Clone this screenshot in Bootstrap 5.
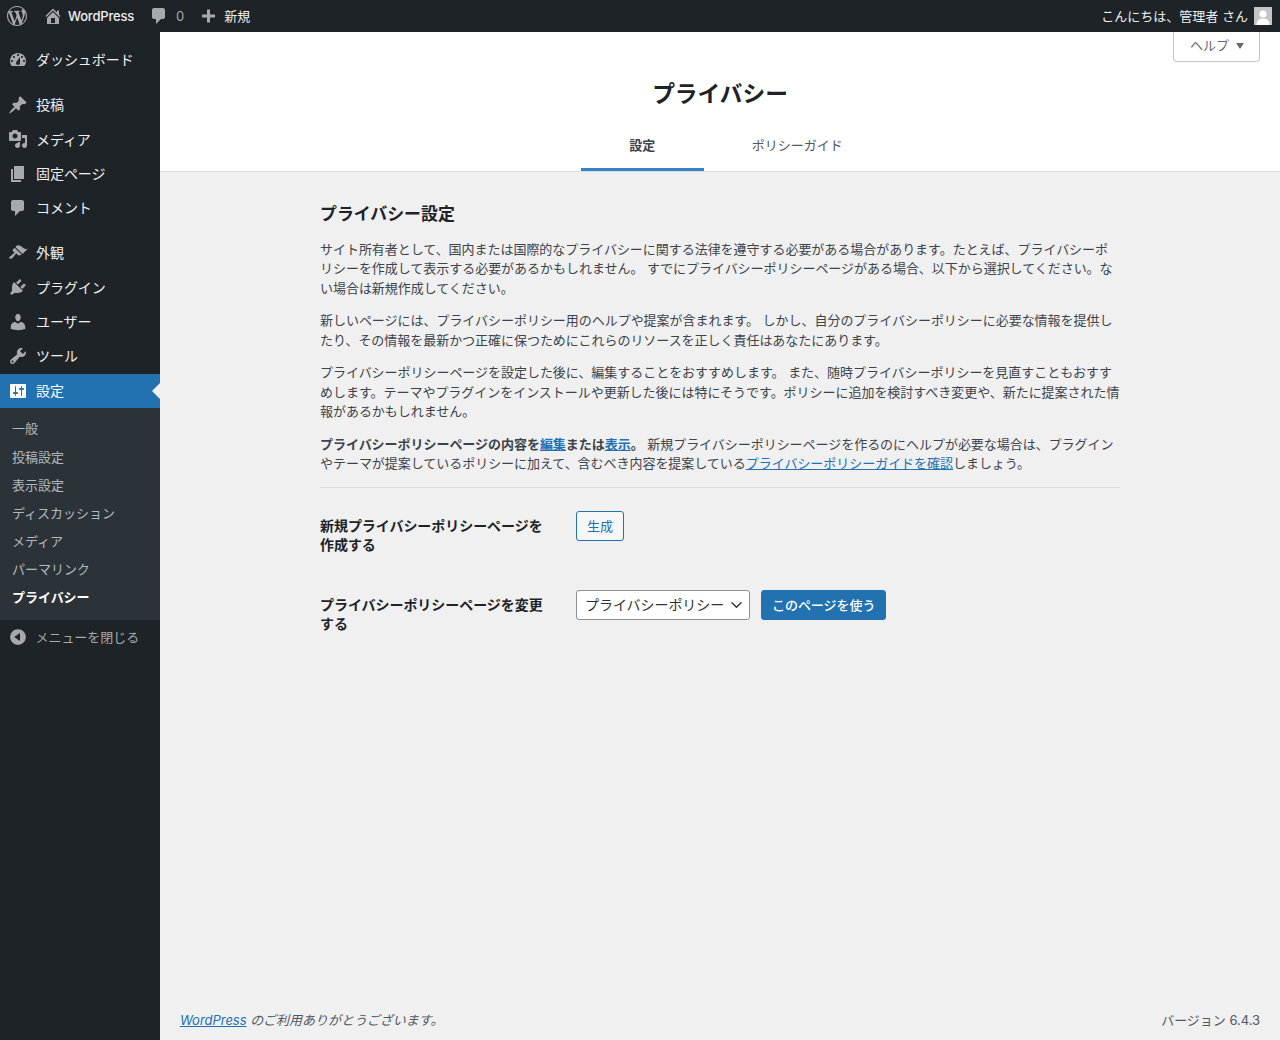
<!DOCTYPE html>
<html lang="ja">
<head>
<meta charset="utf-8">
<title>プライバシー</title>
<link href="https://cdn.jsdelivr.net/npm/bootstrap@5.3.0/dist/css/bootstrap.min.css" rel="stylesheet">
<style>
html,body{height:100%}
body{font-family:Inter,"Noto Sans CJK JP",sans-serif;font-size:13px;line-height:19.5px;color:#3c434a;background:#f0f0f1;min-width:1280px}
svg{fill:currentColor;flex:none;display:block}
.wp-top{height:32px;background:#1d2327;color:#f0f0f1;font-size:13px;line-height:32px}
.wp-top .dim{color:#a7aaad}
.wp-top svg{color:#a7aaad}
.top-logo{padding:0 0 0 7px;width:36px}
.top-site{margin-left:7px;margin-right:15px}
.top-site span{margin-left:5px;letter-spacing:-.2px;font-weight:500}
.top-com span{margin-left:7px}
.top-new{margin-left:14px}
.top-new span{margin-left:6px}
.avatar-box{width:18px;height:18px;background:#c3c4c7;margin:0 8px 0 6px;overflow:hidden}
.avatar-box svg{color:#fff}
.shell{min-height:1008px}
.side{width:160px;background:#1d2327;flex:none;padding-top:11px}
.m-item{height:34.300px;display:flex;align-items:center;color:#f0f0f1;font-size:14px;letter-spacing:-.05px;text-decoration:none;position:relative;flex:none}
.m-item svg{color:#a7aaad;margin:0 8px 0 8px;width:20px;height:20px}
.m-gap{height:10.700px;flex:none}
.m-item.on{background:#2271b1;color:#fff;margin-top:.5px}
.m-item.on svg{color:#fff}
.m-item.on::after{content:"";position:absolute;right:0;top:9px;border:8px solid transparent;border-right-color:#f0f0f1;border-left-width:0}
.subm{background:#2c3338;padding:6.500px 0 8.500px;margin:0}
.subm a{display:block;height:28.200px;line-height:28.200px;padding-left:12px;color:rgba(240,246,252,.7);font-size:13px;letter-spacing:-.03px;text-decoration:none}
.subm a.cur{color:#fff;font-weight:700}
.m-coll{color:#a7aaad;font-size:13px}
.m-coll svg{margin-right:7.500px}
.main-col{min-width:0}
.top-head{background:#fff;height:140px;border-bottom:1px solid #dcdcde;position:relative}
.help-tab{position:absolute;right:20px;top:0;width:87px;height:30px;padding-bottom:1px;border:1px solid #c3c4c7;border-top:0;border-radius:0 0 4px 4px;background:#fff;color:#646970;font-size:13px}
.help-tab span{margin-left:1px}
.help-tab i{display:block;border:4.500px solid transparent;border-top:6px solid #646970;border-bottom:0;margin-left:7px}
.page-ttl{font-size:22.700px;font-weight:700;color:#1d2327;line-height:30px;margin:0;padding-top:47px;text-align:center}
.tabs-row{margin-top:16px;padding-left:32px}
.tab-a{display:block;height:46px;line-height:40px;padding:0 48.500px;text-decoration:none;color:#50575e;font-size:13px;border-bottom:3px solid transparent}
.tab-a.act{color:#3c434a;font-weight:700;border-bottom-color:#3582c4}
.tab-a+.tab-a{padding-left:48px}
.wrap-body{width:800px;margin:0 auto;padding-top:30px}
.sec-ttl{font-size:16.900px;font-weight:700;color:#1d2327;line-height:24px;margin:0 0 13.600px}
.wrap-body p{margin:0 0 13px;font-size:13px;line-height:19.500px;letter-spacing:-.035px}
.wrap-body a{color:#2271b1}
.sep{border:0;border-top:1px solid #dcdcde;opacity:1;margin:13.400px 0 0}
.frow{display:flex}
.frow1{margin-top:23px}
.frow2{margin-top:36px}
.flabel{width:256px;padding-right:28px;font-size:14px;font-weight:700;color:#1d2327;line-height:19.200px;letter-spacing:-.05px;flex:none;padding-top:5px}
.frow2 .flabel{padding-top:4.500px}
.frow .btn{font-size:13px;line-height:28px;padding:0 10px;border-radius:3px;height:30px;letter-spacing:-.05px}
.btn-gen{color:#2271b1;border:1px solid #2271b1;background:#f6f7f7}
.btn-use{background:#2271b1;border:1px solid #2271b1;color:#fff;margin-left:11px;font-weight:500}
.sel-x{width:174px;height:30px;font-size:14px;line-height:28px;padding:0 24px 0 8px;border:1px solid #8c8f94;border-radius:3px;color:#2c3338;background-position:right 5px center;background-size:15px 12px;letter-spacing:-.05px}
.foot-x{margin-top:auto;padding:0 20px 10px;color:#50575e;font-size:13px;letter-spacing:-.03px}
.foot-x a{color:#2271b1}
</style>
</head>
<body>
<div class="wp-top d-flex align-items-center">
  <div class="top-logo"><svg width="20" height="20" viewBox="0 0 20 20"><path d="M20 10c0-5.510-4.490-10-10-10C4.480 0 0 4.490 0 10c0 5.520 4.480 10 10 10 5.510 0 10-4.480 10-10zM7.780 15.370L4.370 6.220c.55-.02 1.170-.08 1.170-.08.5-.06.44-1.130-.06-1.110 0 0-1.450.11-2.370.11-.18 0-.37 0-.58-.01C4.120 2.690 6.870 1.110 10 1.110c2.330 0 4.450.87 6.050 2.340-.68-.11-1.650.39-1.650 1.580 0 .74.45 1.360.9 2.100.35.61.55 1.360.55 2.460 0 1.490-1.400 5-1.400 5l-3.030-8.370c.54-.02.82-.17.82-.17.5-.05.44-1.250-.06-1.220 0 0-1.440.12-2.380.12-.87 0-2.330-.12-2.330-.12-.5-.03-.56 1.200-.06 1.220l.92.08 1.260 3.410zM17.410 10c.24-.64.74-1.870.43-4.250.7 1.290 1.050 2.710 1.050 4.250 0 3.290-1.730 6.240-4.400 7.780.97-2.590 1.940-5.200 2.920-7.780zM6.100 18.090C3.120 16.650 1.110 13.530 1.110 10c0-1.300.23-2.480.72-3.590C3.250 10.300 4.670 14.200 6.100 18.090zm4.030-6.630l2.580 6.980c-.86.29-1.760.45-2.710.45-.79 0-1.570-.11-2.290-.33.81-2.380 1.620-4.740 2.420-7.100z"/></svg></div>
  <div class="top-site d-flex align-items-center"><svg width="20" height="20" viewBox="0 0 20 20"><path d="M16 8.500l1.530 1.530-1.060 1.060L10 4.620l-6.470 6.470-1.060-1.060L10 2.500l4 4v-2h2v4zm-6-2.460l6 5.990V18H4v-5.970zM12 17v-5H8v5h4z"/></svg><span>WordPress</span></div>
  <div class="top-com d-flex align-items-center"><svg width="20" height="20" viewBox="0 0 20 20"><path d="M5 2h9c1.100 0 2 .9 2 2v7c0 1.100-.9 2-2 2h-2l-5 5v-5H5c-1.100 0-2-.9-2-2V4c0-1.100.9-2 2-2z"/></svg><span class="dim">0</span></div>
  <div class="top-new d-flex align-items-center"><svg width="20" height="20" viewBox="0 0 20 20"><path d="M17 8.500v3h-5v5H9v-5H4v-3h5v-5h3v5h5z"/></svg><span>新規</span></div>
  <div class="ms-auto d-flex align-items-center"><span>こんにちは、管理者 さん</span><div class="avatar-box"><svg width="18" height="18" viewBox="0 0 18 18"><circle cx="9" cy="7" r="3.600"/><path d="M2.500 18c0-4.500 2.500-6.500 6.500-6.500s6.500 2 6.500 6.500z"/></svg></div></div>
</div>
<div class="shell d-flex">
  <nav class="side d-flex flex-column">
    <a class="m-item" href="#"><svg viewBox="0 0 20 20"><path fill-rule="evenodd" d="M3.760 16h12.480c1.100-1.370 1.760-3.110 1.760-5 0-4.420-3.580-8-8-8s-8 3.580-8 8c0 1.890.660 3.630 1.760 5zM10 4c.55 0 1 .45 1 1s-.45 1-1 1-1-.45-1-1 .45-1 1-1zM6 6c.55 0 1 .45 1 1s-.45 1-1 1-1-.45-1-1 .45-1 1-1zm8 0c.55 0 1 .45 1 1s-.45 1-1 1-1-.45-1-1 .45-1 1-1zm-5.370 5.550L12 7v6c0 1.100-.9 2-2 2s-2-.9-2-2c0-.57.24-1.080.63-1.450zM4 10c.55 0 1 .45 1 1s-.45 1-1 1-1-.45-1-1 .45-1 1-1zm12 0c.55 0 1 .45 1 1s-.45 1-1 1-1-.45-1-1 .45-1 1-1z"/></svg>ダッシュボード</a>
    <div class="m-gap"></div>
    <a class="m-item" href="#"><svg viewBox="0 0 20 20"><path d="M10.440 3.020l1.820-1.820 6.360 6.350-1.830 1.820c-1.050-.68-2.480-.57-3.410.36l-.75.75c-.92.93-1.040 2.350-.35 3.410l-1.830 1.820-2.410-2.410-2.800 2.790c-.42.42-3.380 2.710-3.800 2.290s1.860-3.390 2.280-3.810l2.790-2.790L4.100 9.360l1.830-1.820c1.050.69 2.480.57 3.410-.36l.75-.75c.93-.92 1.050-2.350.35-3.410z"/></svg>投稿</a>
    <a class="m-item" href="#"><svg viewBox="0 0 20 20"><path d="M13 11V4c0-.55-.45-1-1-1h-1.670L9 1H5L3.670 3H2c-.55 0-1 .45-1 1v7c0 .55.45 1 1 1h10c.55 0 1-.45 1-1zM7 4.500c1.380 0 2.500 1.120 2.500 2.500S8.380 9.500 7 9.500 4.500 8.380 4.500 7 5.620 4.500 7 4.500zM14 6h5v10.500c0 1.380-1.120 2.500-2.500 2.500S14 17.880 14 16.500s1.120-2.500 2.500-2.500c.17 0 .34.02.5.05V9h-3V6zm-4 8.050V13h2v3.500c0 1.380-1.120 2.500-2.500 2.500S7 17.880 7 16.500 8.120 14 9.500 14c.17 0 .34.02.5.05z"/></svg>メディア</a>
    <a class="m-item" href="#"><svg viewBox="0 0 20 20"><path d="M6 15V2h10v13H6zm-1 1h8v2H3V5h2v11z"/></svg>固定ページ</a>
    <a class="m-item" href="#"><svg viewBox="0 0 20 20"><path d="M5 2h9c1.100 0 2 .9 2 2v7c0 1.100-.9 2-2 2h-2l-5 5v-5H5c-1.100 0-2-.9-2-2V4c0-1.100.9-2 2-2z"/></svg>コメント</a>
    <div class="m-gap"></div>
    <a class="m-item" href="#"><svg viewBox="0 0 20 20"><path d="M14.480 11.060L7.410 3.990l1.500-1.500c.5-.56 2.300-.47 3.510.32 1.210.8 1.430 1.280 2.910 2.100 1.180.64 2.450 1.260 4.450.85zm-.71.71L6.700 4.700 4.930 6.470c-.39.39-.39 1.020 0 1.410l1.060 1.060c.39.39.39 1.030 0 1.420-.6.6-1.430 1.110-2.210 1.690-.35.26-.7.53-1.010.84C1.430 13.230.76 14.700 1.550 15.500c.79.79 2.260.12 3.600-1.210.31-.31.58-.66.84-1.010.58-.78 1.090-1.610 1.690-2.210.39-.39 1.020-.39 1.410 0l1.060 1.060c.39.39 1.020.39 1.410 0z"/></svg>外観</a>
    <a class="m-item" href="#"><svg viewBox="0 0 20 20"><path d="M13.110 4.360L9.870 7.600 8 5.730l3.240-3.240c.35-.34 1.050-.2 1.560.32.52.51.66 1.210.31 1.550zm-8 1.770l.91-1.120 9.010 9.010-1.190.84c-.71.71-2.630 1.160-3.820 1.160H6.140L4.900 17.260c-.59.59-1.540.59-2.120 0-.59-.58-.59-1.530 0-2.120l1.240-1.240v-3.880c0-1.130.4-3.190 1.090-3.890zm7.260 3.970l3.240-3.240c.34-.35 1.040-.21 1.550.31.52.51.66 1.210.31 1.550l-3.240 3.250z"/></svg>プラグイン</a>
    <a class="m-item" href="#"><svg viewBox="0 0 20 20"><path d="M10 9.250c-2.270 0-2.730-3.440-2.730-3.440C7 4.020 7.820 2 9.970 2c2.160 0 2.980 2.020 2.710 3.810 0 0-.41 3.440-2.680 3.440zm0 2.570L12.720 10c2.390 0 4.520 2.330 4.520 4.530v2.490s-3.650 1.130-7.240 1.130c-3.650 0-7.240-1.130-7.240-1.130v-2.490c0-2.250 1.940-4.480 4.470-4.480z"/></svg>ユーザー</a>
    <a class="m-item" href="#"><svg viewBox="0 0 20 20"><path d="M16.680 9.770c-1.340 1.340-3.300 1.670-4.950.99l-5.410 6.520c-.99.99-2.590.99-3.580 0s-.99-2.590 0-3.570l6.520-5.420c-.68-1.650-.35-3.610.99-4.950 1.280-1.280 3.120-1.620 4.720-1.060l-2.890 2.890 2.820 2.820 2.860-2.870c.53 1.580.18 3.390-1.080 4.650zM3.810 16.210c.4.39 1.040.39 1.430 0 .4-.4.4-1.040 0-1.430-.39-.4-1.030-.4-1.430 0-.39.39-.39 1.030 0 1.430z"/></svg>ツール</a>
    <a class="m-item on" href="#"><svg viewBox="0 0 20 20"><path d="M18 16V4c0-.55-.45-1-1-1H3c-.55 0-1 .45-1 1v12c0 .55.45 1 1 1h14c.55 0 1-.45 1-1zM8 11h1c.55 0 1 .45 1 1s-.45 1-1 1H8v1.500c0 .28-.22.5-.5.5s-.5-.22-.5-.5V13H6c-.55 0-1-.45-1-1s.45-1 1-1h1V5.500c0-.28.22-.5.5-.5s.5.22.5.5V11zm5-2h-1c-.55 0-1-.45-1-1s.45-1 1-1h1V5.500c0-.28.22-.5.5-.5s.5.22.5.5V7h1c.55 0 1 .45 1 1s-.45 1-1 1h-1v5.500c0 .28-.22.5-.5.5s-.5-.22-.5-.5V9z"/></svg>設定</a>
    <div class="subm">
      <a href="#">一般</a><a href="#">投稿設定</a><a href="#">表示設定</a><a href="#">ディスカッション</a><a href="#">メディア</a><a href="#">パーマリンク</a><a class="cur" href="#">プライバシー</a>
    </div>
    <a class="m-item m-coll" href="#"><svg viewBox="0 0 20 20"><path d="M10 2.160c4.330 0 7.840 3.510 7.840 7.840s-3.510 7.840-7.840 7.840S2.160 14.330 2.160 10 5.710 2.160 10 2.160zm2 11.720V6.120L6.180 9.970z"/></svg>メニューを閉じる</a>
  </nav>
  <div class="main-col flex-grow-1 d-flex flex-column">
    <header class="top-head">
      <div class="help-tab d-flex align-items-center justify-content-center"><span>ヘルプ</span><i></i></div>
      <h1 class="page-ttl">プライバシー</h1>
      <div class="tabs-row d-flex justify-content-center">
        <a class="tab-a act" href="#">設定</a>
        <a class="tab-a" href="#">ポリシーガイド</a>
      </div>
    </header>
    <main class="wrap-body">
      <h2 class="sec-ttl">プライバシー設定</h2>
      <p>サイト所有者として、国内または国際的なプライバシーに関する法律を遵守する必要がある場合があります。たとえば、プライバシーポリシーを作成して表示する必要があるかもしれません。 すでにプライバシーポリシーページがある場合、以下から選択してください。ない場合は新規作成してください。</p>
      <p>新しいページには、プライバシーポリシー用のヘルプや提案が含まれます。 しかし、自分のプライバシーポリシーに必要な情報を提供したり、その情報を最新かつ正確に保つためにこれらのリソースを正しく責任はあなたにあります。</p>
      <p>プライバシーポリシーページを設定した後に、編集することをおすすめします。 また、随時プライバシーポリシーを見直すこともおすすめします。テーマやプラグインをインストールや更新した後には特にそうです。ポリシーに追加を検討すべき変更や、新たに提案された情報があるかもしれません。</p>
      <p class="mb-0"><strong>プライバシーポリシーページの内容を<a href="#">編集</a>または<a href="#">表示</a>。</strong> 新規プライバシーポリシーページを作るのにヘルプが必要な場合は、プラグインやテーマが提案しているポリシーに加えて、含むべき内容を提案している<a href="#">プライバシーポリシーガイドを確認</a>しましょう。</p>
      <hr class="sep">
      <div class="frow frow1">
        <div class="flabel">新規プライバシーポリシーページを作成する</div>
        <div><button class="btn btn-gen" type="button">生成</button></div>
      </div>
      <div class="frow frow2">
        <div class="flabel">プライバシーポリシーページを変更する</div>
        <div class="d-flex">
          <select class="form-select sel-x"><option>プライバシーポリシー</option></select>
          <button class="btn btn-use" type="button">このページを使う</button>
        </div>
      </div>
    </main>
    <footer class="foot-x d-flex justify-content-between">
      <em><a href="#">WordPress</a> のご利用ありがとうございます。</em>
      <span>バージョン 6.4.3</span>
    </footer>
  </div>
</div>
<script src="https://cdn.jsdelivr.net/npm/bootstrap@5.3.0/dist/js/bootstrap.bundle.min.js"></script>
</body>
</html>
